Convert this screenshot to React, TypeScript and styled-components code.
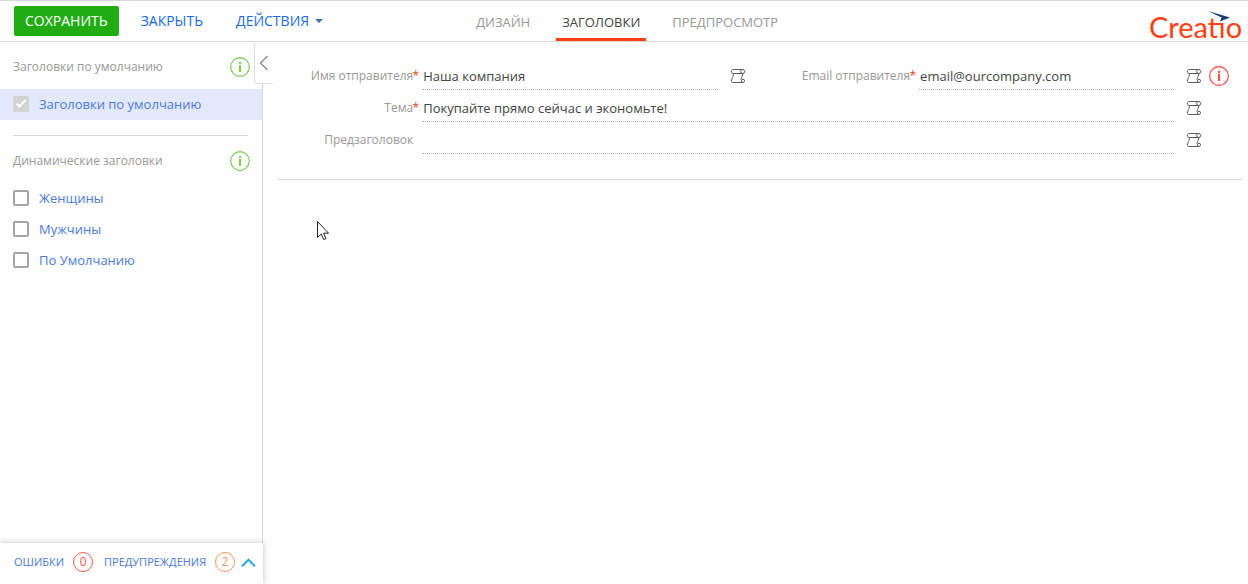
import React from "react";
import styled, { createGlobalStyle } from "styled-components";

const GlobalStyle = createGlobalStyle`
  *, *::before, *::after { box-sizing: border-box; }
  body {
    margin: 0;
    background: #fdfefd;
    color: #444;
    font-family: "Open Sans", "Noto Sans", sans-serif;
    font-size: 13px;
    line-height: 20px;
  }
  button, input { font: inherit; color: inherit; }
  button { cursor: pointer; }
`;

const Page = styled.div`
  display: flex;
  flex-direction: column;
  min-height: 100vh;
`;

const Header = styled.header`
  display: grid;
  grid-template-columns: minmax(450px, 450fr) auto minmax(200px, 444fr);
  grid-template-rows: 40px;
  align-items: stretch;
  border-top: 1px solid #d6d7dd;
  border-bottom: 1px solid #d8d8d8;
`;

const Toolbar = styled.div`
  display: flex;
  align-items: center;
  gap: 11px;
  padding-left: 14px;
`;

const ToolButton = styled.button<{ $primary?: boolean }>`
  display: flex;
  align-items: center;
  gap: 6px;
  height: 30px;
  padding: 0 11px;
  border: 0;
  border-radius: 2px;
  background: ${(p) => (p.$primary ? "#22ac14" : "transparent")};
  color: ${(p) => (p.$primary ? "#fff" : "#1a6be0")};
  font-size: 14px;
  white-space: nowrap;
`;

const Tabs = styled.nav`
  display: flex;
  gap: 20px;
`;

const Tab = styled.button<{ $active?: boolean }>`
  padding: 4px 6px 0;
  border: 0;
  border-bottom: 3px solid ${(p) => (p.$active ? "#ff4013" : "transparent")};
  background: none;
  color: ${(p) => (p.$active ? "#444" : "#999")};
  font-size: 13px;
`;

const LogoLink = styled.a`
  justify-self: end;
  display: block;
  padding: 5px 1px 0 0;
  line-height: 0;
`;

const Body = styled.div`
  display: flex;
  flex: 1;
`;

const Sidebar = styled.aside`
  position: relative;
  display: flex;
  flex-direction: column;
  flex: 0 0 263px;
  border-right: 1px solid #d8d8d8;
`;

const SectionHead = styled.div`
  display: flex;
  align-items: center;
  justify-content: space-between;
  padding: 15px 12px 12px 13px;
`;

const SectionTitle = styled.h2`
  margin: 0;
  color: #999;
  font-size: 12px;
  font-weight: 400;
`;

const InfoButton = styled.button<{ $tone: string }>`
  width: 20px;
  height: 20px;
  padding: 0;
  border: 0;
  background: none;
  color: ${(p) => p.$tone};
  svg { display: block; }
`;

const Option = styled.label<{ $selected?: boolean }>`
  display: flex;
  align-items: center;
  gap: 10px;
  height: 31px;
  padding: 0 0 2px 13px;
  background: ${(p) => (p.$selected ? "#e3e8fa" : "transparent")};
  color: #4c7bd9;
`;

const Tick = styled.input`
  appearance: none;
  display: grid;
  place-items: center;
  width: 16px;
  height: 16px;
  margin: 0;
  border: 2px solid #a5a5a5;
  border-radius: 2px;
  background: #fff;
  &:checked { border-color: #d3d3d3; background: #d3d3d3; }
  &:checked::before {
    content: "";
    width: 10px;
    height: 5px;
    margin-bottom: 3px;
    border-left: 2px solid #fff;
    border-bottom: 2px solid #fff;
    transform: rotate(-45deg);
  }
`;

const Divider = styled.hr`
  width: 235px;
  margin: 15px 0 0 13px;
  border: 0;
  border-top: 1px solid #d8d8d8;
`;

const CollapseButton = styled.button`
  position: absolute;
  top: 0;
  right: -11px;
  width: 19px;
  height: 42px;
  padding: 0;
  border: 1px solid #dfdfe4;
  border-width: 0 0 1px 1px;
  border-radius: 4px 0 0 4px;
  background: #fdfefd;
  color: #888;
  svg { display: block; margin-left: 4px; }
`;

const StatusBar = styled.footer`
  display: flex;
  align-items: center;
  height: 41px;
  margin: auto -1px 0 0;
  padding: 0 7px 4px 14px;
  background: #fdfefd;
  box-shadow: 0 0 6px rgba(0, 0, 0, 0.25);
  clip-path: inset(-8px -8px 0 0);
`;

const StatusLink = styled.a`
  color: #4c7bd9;
  font-size: 11px;
  text-decoration: none;
`;

const Count = styled.span<{ $tone: string }>`
  display: flex;
  align-items: center;
  justify-content: center;
  width: 20px;
  height: 20px;
  margin: 0 11px 0 9px;
  border: 1px solid ${(p) => p.$tone};
  border-radius: 50%;
  color: ${(p) => p.$tone};
  font-size: 12px;
  &:last-of-type { margin-right: 6px; }
`;

const ExpandButton = styled.button`
  padding: 2px 0 0;
  border: 0;
  background: none;
  svg { display: block; }
`;

const Main = styled.main`
  flex: 1;
  min-width: 0;
  padding: 20px 6px 0 15px;
`;

const Form = styled.form`
  display: grid;
  grid-template-columns: 144px 296fr 42px 159px 255fr 68px;
  row-gap: 4px;
  padding-bottom: 25px;
  border-bottom: 1px solid #d8d8d8;
`;

const FieldLabel = styled.label`
  position: relative;
  padding-right: 9px;
  color: #999;
  font-size: 12px;
  line-height: 28px;
  text-align: right;
  white-space: nowrap;
`;

const Star = styled.span`
  position: absolute;
  right: 3px;
  color: #ff4013;
`;

const TextBox = styled.input<{ $wide?: boolean }>`
  grid-column: ${(p) => (p.$wide ? "span 4" : "auto")};
  width: 100%;
  min-width: 0;
  height: 28px;
  padding: 1px 1px 0;
  border: 0;
  border-bottom: 1px dotted #b5b5b5;
  background: none;
  outline: 0;
`;

const Actions = styled.div`
  display: flex;
  align-items: center;
  gap: 7px;
  padding-left: 12px;
`;

const MacroButton = styled.button`
  padding: 0;
  border: 0;
  background: none;
  color: #5a5a62;
  svg { display: block; }
`;

const Pointer = styled.svg`
  position: absolute;
  left: 316px;
  top: 220px;
  pointer-events: none;
`;

const InfoIcon = () => (
  <svg width="20" height="20" viewBox="0 0 20 20" fill="none" stroke="currentColor">
    <circle cx="10" cy="10" r="9.3" strokeWidth="1.2" />
    <path d="M10 8v7M10 5v2" strokeWidth="2" />
  </svg>
);

const ScrollIcon = () => (
  <svg width="16" height="16" viewBox="0 0 16 16" fill="none" stroke="currentColor">
    <path d="M12.500 1.500H3C2 1.500 1.500 2.400 1.500 3.500S2 5.500 3 5.500h9.500" />
    <circle cx="12.700" cy="3.500" r="2" />
    <path d="M3.500 5.500c0 3-2 5-2 7.400 0 1 .5 1.600 1.500 1.600h10M13 5.500c0 2.200-1.700 3.500-2 6" />
    <circle cx="12.900" cy="12.900" r="1.600" />
  </svg>
);

const Macro = () => (
  <MacroButton type="button" aria-label="Вставить макрос">
    <ScrollIcon />
  </MacroButton>
);

const Logo = () => (
  <svg width="98" height="42" viewBox="0 0 98 42" role="img" aria-label="Creatio">
    <text x="0" y="32" fill="#ff4013" fontFamily="Lato, sans-serif" fontSize="29">
      Creatıo
    </text>
    <path d="M59 5l22 6.500-10 4 1.500-4z" fill="#17407a" />
  </svg>
);

const groups = ["Женщины", "Мужчины", "По Умолчанию"];

export default function App() {
  return (
    <Page>
      <GlobalStyle />
      <Header>
        <Toolbar>
          <ToolButton $primary>СОХРАНИТЬ</ToolButton>
          <ToolButton>ЗАКРЫТЬ</ToolButton>
          <ToolButton>
            ДЕЙСТВИЯ
            <svg width="8" height="4" viewBox="0 0 8 4">
              <path d="M0 0h8L4 4z" fill="#4a6da8" />
            </svg>
          </ToolButton>
        </Toolbar>
        <Tabs>
          <Tab>ДИЗАЙН</Tab>
          <Tab $active>ЗАГОЛОВКИ</Tab>
          <Tab>ПРЕДПРОСМОТР</Tab>
        </Tabs>
        <LogoLink href="#">
          <Logo />
        </LogoLink>
      </Header>
      <Body>
        <Sidebar>
          <SectionHead>
            <SectionTitle>Заголовки по умолчанию</SectionTitle>
            <InfoButton $tone="#7fc954" aria-label="Справка"><InfoIcon /></InfoButton>
          </SectionHead>
          <Option $selected>
            <Tick type="checkbox" defaultChecked disabled />
            Заголовки по умолчанию
          </Option>
          <Divider />
          <SectionHead>
            <SectionTitle>Динамические заголовки</SectionTitle>
            <InfoButton $tone="#7fc954" aria-label="Справка"><InfoIcon /></InfoButton>
          </SectionHead>
          {groups.map((name) => (
            <Option key={name}>
              <Tick type="checkbox" />
              {name}
            </Option>
          ))}
          <StatusBar>
            <StatusLink href="#errors">ОШИБКИ</StatusLink>
            <Count $tone="#f55a4e">0</Count>
            <StatusLink href="#warnings">ПРЕДУПРЕЖДЕНИЯ</StatusLink>
            <Count $tone="#f79562">2</Count>
            <ExpandButton aria-label="Развернуть">
              <svg width="15" height="9" viewBox="0 0 15 9" fill="none" stroke="#35a8e8" strokeWidth="2.2">
                <path d="M1 8.200l6.500-6.500L14 8.200" />
              </svg>
            </ExpandButton>
          </StatusBar>
          <CollapseButton aria-label="Свернуть панель">
            <svg width="10" height="16" viewBox="0 0 10 16" fill="none" stroke="currentColor" strokeWidth="1.3">
              <path d="M8.500 1L1.500 8l7 7" />
            </svg>
          </CollapseButton>
        </Sidebar>
        <Main>
          <Form>
            <FieldLabel htmlFor="sender">Имя отправителя<Star>*</Star></FieldLabel>
            <TextBox id="sender" defaultValue="Наша компания" />
            <Actions><Macro /></Actions>
            <FieldLabel htmlFor="email">Email отправителя<Star>*</Star></FieldLabel>
            <TextBox id="email" defaultValue="email@ourcompany.com" />
            <Actions>
              <Macro />
              <InfoButton $tone="#fb4a40" type="button" aria-label="Ошибка"><InfoIcon /></InfoButton>
            </Actions>
            <FieldLabel htmlFor="subject">Тема<Star>*</Star></FieldLabel>
            <TextBox id="subject" $wide defaultValue="Покупайте прямо сейчас и экономьте!" />
            <Actions><Macro /></Actions>
            <FieldLabel htmlFor="preheader">Предзаголовок</FieldLabel>
            <TextBox id="preheader" $wide />
            <Actions><Macro /></Actions>
          </Form>
        </Main>
      </Body>
      <Pointer width="14" height="22" viewBox="0 0 14 22">
        <path d="M1.500 1.500v16l3.700-3.500 2.500 5.500 2.300-1-2.400-5.300h4.900z" fill="#fff" stroke="#222" />
      </Pointer>
    </Page>
  );
}
